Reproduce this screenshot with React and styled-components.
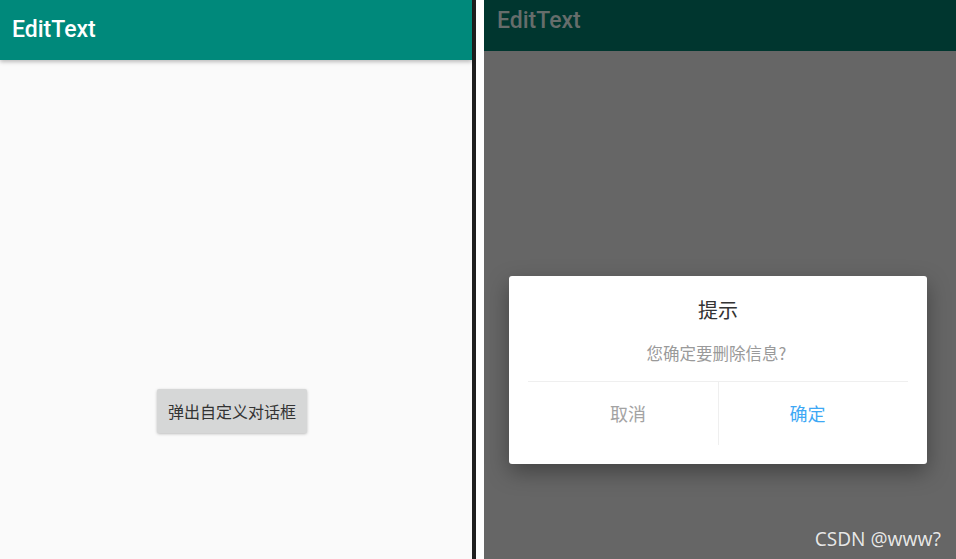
import React from "react";
import styled, { createGlobalStyle } from "styled-components";

const GlobalStyle = createGlobalStyle`
  html, body {
    margin: 0;
    padding: 0;
    background: #ffffff;
  }
  body {
    font-family: Roboto, "Noto Sans CJK SC", sans-serif;
  }
`;

const Page = styled.div`
  display: flex;
  width: 956px;
  height: 559px;
  overflow: hidden;
  background: #ffffff;
`;

const Screen = styled.div`
  position: relative;
  display: flex;
  flex-direction: column;
  width: 472px;
  height: 100%;
  flex-shrink: 0;
  background: ${(p) => (p.$dimmed ? "#666666" : "#fafafa")};
`;

const Divider = styled.div`
  width: 4px;
  height: 100%;
  background: #1f1f1f;
  flex-shrink: 0;
`;

const Gap = styled.div`
  width: 8px;
  height: 100%;
  background: #ffffff;
  flex-shrink: 0;
`;

const AppBar = styled.div`
  display: flex;
  align-items: center;
  height: ${(p) => (p.$dimmed ? "51px" : "60px")};
  padding-left: ${(p) => (p.$dimmed ? "13px" : "12px")};
  padding-bottom: ${(p) => (p.$dimmed ? "10px" : "2px")};
  box-sizing: border-box;
  flex-shrink: 0;
  background: ${(p) => (p.$dimmed ? "#00362f" : "#00897b")};
  box-shadow: ${(p) => (p.$dimmed ? "none" : "0 2px 4px rgba(0,0,0,0.25)")};
  position: relative;
  z-index: 1;
`;

const Title = styled.div`
  font-family: Roboto, sans-serif;
  font-weight: 500;
  font-size: 23px;
  color: ${(p) => (p.$dimmed ? "#666d6b" : "#ffffff")};
`;

const Body = styled.div`
  flex: 1;
  display: flex;
  flex-direction: column;
  align-items: flex-start;
`;

const LeftBody = styled(Body)`
  padding: 329px 0 0 157px;
`;

const RaisedButton = styled.button`
  width: 150px;
  height: 44px;
  border: none;
  border-radius: 2px;
  background: #d6d7d7;
  color: #333333;
  font-family: "Noto Sans CJK SC", sans-serif;
  font-size: 16px;
  box-shadow: 0 1px 3px rgba(0, 0, 0, 0.25);
  padding: 0;
  cursor: pointer;
`;

const RightBody = styled(Body)`
  padding: 225px 0 0 25px;
`;

const Dialog = styled.div`
  width: 418px;
  height: 188px;
  box-sizing: border-box;
  background: #ffffff;
  border-radius: 3px;
  padding: 20px 19px 19px;
  display: flex;
  flex-direction: column;
  box-shadow: 0 8px 22px rgba(0, 0, 0, 0.35);
`;

const DialogTitle = styled.div`
  text-align: center;
  font-family: "Noto Sans CJK SC", sans-serif;
  font-size: 20px;
  line-height: 28px;
  color: #333333;
`;

const Message = styled.div`
  margin-top: 18px;
  text-align: center;
  font-family: "Noto Sans CJK SC", sans-serif;
  font-size: 16.5px;
  line-height: 22px;
  color: #9a9a9a;
  padding-right: 3px;
`;

const Actions = styled.div`
  margin-top: 17px;
  border-top: 1px solid #efefef;
  display: grid;
  grid-template-columns: 1fr 1fr;
  flex: 1;
`;

const Action = styled.div`
  display: flex;
  align-items: center;
  justify-content: center;
  font-family: "Noto Sans CJK SC", sans-serif;
  font-size: 18px;
  color: ${(p) => (p.$primary ? "#3ea8f5" : "#a3a3a3")};
  border-left: ${(p) => (p.$primary ? "1px solid #efefef" : "none")};
  padding: ${(p) => (p.$primary ? "0 12px 2px 0" : "0 0 2px 10px")};
`;

const Watermark = styled.div`
  position: absolute;
  right: 15px;
  bottom: 7px;
  font-family: "Noto Sans", sans-serif;
  font-size: 19px;
  color: #e6e6e6;
  text-shadow: 0 0 1px rgba(0, 0, 0, 0.3);
`;

export default function App() {
  return (
    <Page>
      <GlobalStyle />
      <Screen>
        <AppBar>
          <Title>EditText</Title>
        </AppBar>
        <LeftBody>
          <RaisedButton>弹出自定义对话框</RaisedButton>
        </LeftBody>
      </Screen>
      <Divider />
      <Gap />
      <Screen $dimmed>
        <AppBar $dimmed>
          <Title $dimmed>EditText</Title>
        </AppBar>
        <RightBody>
          <Dialog>
            <DialogTitle>提示</DialogTitle>
            <Message>您确定要删除信息?</Message>
            <Actions>
              <Action>取消</Action>
              <Action $primary>确定</Action>
            </Actions>
          </Dialog>
        </RightBody>
        <Watermark>CSDN @www?</Watermark>
      </Screen>
    </Page>
  );
}
